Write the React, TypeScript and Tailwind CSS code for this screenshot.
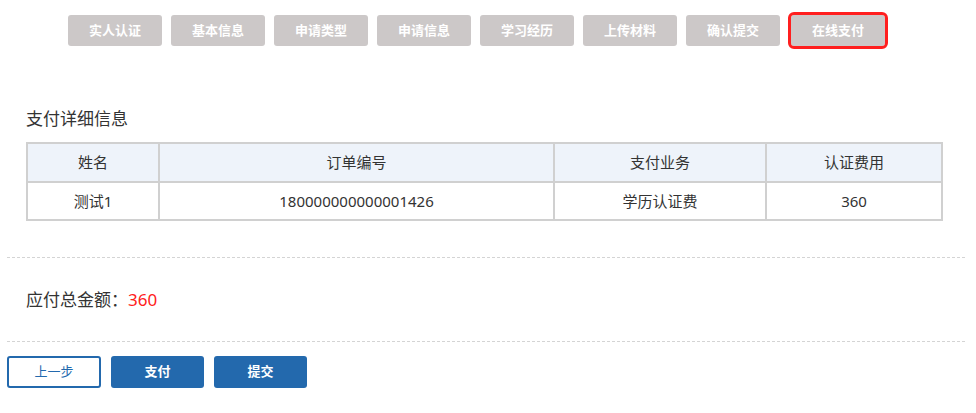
import React from "react";

const steps = ["实人认证", "基本信息", "申请类型", "申请信息", "学习经历", "上传材料", "确认提交"];

export default function App() {
  return (
    <div
      className="w-[976px] h-[413px] bg-white text-[#333] overflow-hidden"
      style={{ fontFamily: '"Noto Sans", "Noto Sans CJK SC", sans-serif' }}
    >
      <div className="flex items-center gap-[9px] pl-[68px] pt-[15px]">
        {steps.map((s) => (
          <div
            key={s}
            className="w-[94px] h-[31px] rounded-[3px] bg-[#ccc8c8] text-white text-[13px] font-semibold flex items-center justify-center"
          >
            {s}
          </div>
        ))}
        <div className="ml-[2px] w-[94px] h-[31px] rounded-[3px] bg-[#ccc8c8] text-white text-[13px] font-semibold flex items-center justify-center outline-[3px] outline-solid outline-[#ff1f1f]">
          在线支付
        </div>
      </div>

      <div className="px-[7px] pt-[61px]">
        <div className="px-[19px] pb-[36px]">
          <div className="text-[17px] leading-[24px] mb-[11px]">支付详细信息</div>
          <table className="w-[917px] border-collapse text-[15px] text-center">
            <thead>
              <tr className="bg-[#eef3fa] h-[39px]">
                <th className="font-normal border-2 border-[#d0d0d0] w-[132px]">姓名</th>
                <th className="font-normal border-2 border-[#d0d0d0] w-[395px]">订单编号</th>
                <th className="font-normal border-2 border-[#d0d0d0] w-[212px]">支付业务</th>
                <th className="font-normal border-2 border-[#d0d0d0]">认证费用</th>
              </tr>
            </thead>
            <tbody>
              <tr className="h-[38px]">
                <td className="border-2 border-[#d0d0d0]">测试1</td>
                <td className="border-2 border-[#d0d0d0]">180000000000001426</td>
                <td className="border-2 border-[#d0d0d0]">学历认证费</td>
                <td className="border-2 border-[#d0d0d0]">360</td>
              </tr>
            </tbody>
          </table>
        </div>
        <div className="w-[958px] border-t border-dashed border-[#d4d4d4]"></div>
        <div className="h-[83px] flex items-center px-[19px] text-[17px]">
          <span>应付总金额：</span>
          <span className="text-[#ff2020]">360</span>
        </div>
        <div className="w-[958px] border-t border-dashed border-[#d4d4d4]"></div>
        <div className="flex gap-[10px] pt-[14px]">
          <button className="w-[94px] h-[32px] rounded-[3px] border-2 border-[#2369ad] bg-white text-[#2369ad] text-[13px] flex items-center justify-center">
            上一步
          </button>
          <button className="w-[93px] h-[32px] rounded-[3px] bg-[#2369ad] text-white text-[13px] font-semibold flex items-center justify-center">
            支付
          </button>
          <button className="w-[93px] h-[32px] rounded-[3px] bg-[#2369ad] text-white text-[13px] font-semibold flex items-center justify-center">
            提交
          </button>
        </div>
      </div>
    </div>
  );
}
